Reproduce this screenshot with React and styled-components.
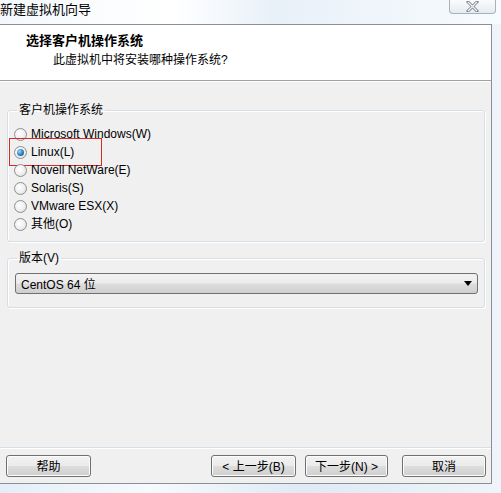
import React from "react";
import styled, { createGlobalStyle } from "styled-components";

const Global = createGlobalStyle`
  html, body {
    margin: 0;
    padding: 0;
    background: #dfe9f3;
  }
  body {
    font-family: "Liberation Sans", "Noto Sans CJK SC", sans-serif;
    font-size: 12px;
    color: #000;
  }
`;

const Window = styled.div`
  width: 501px;
  height: 493px;
  display: flex;
  flex-direction: column;
  overflow: hidden;
  background: linear-gradient(90deg, #e4eef8 0%, #f6fafd 30%, #dfeaf5 60%, #eef4fa 100%);
`;

const TitleBar = styled.div`
  height: 24px;
  flex: none;
  position: relative;
  display: flex;
  align-items: flex-start;
  font-size: 13px;
  color: #000;
  background: linear-gradient(90deg, #f4f8fc 0%, #ffffff 35%, #e8f0f8 55%, #f8fbfe 100%);
`;

const TitleText = styled.span`
  margin-top: 2px;
  line-height: 16px;
`;

const CloseButton = styled.div`
  position: absolute;
  top: 0;
  left: 449px;
  width: 47px;
  height: 14px;
  border: 1px solid #a8b2bd;
  border-top: none;
  border-radius: 0 0 4px 4px;
  background: linear-gradient(#fafbfc, #e6ebf0);
  display: flex;
  align-items: center;
  justify-content: center;
  box-sizing: border-box;
`;

const Client = styled.div`
  flex: 1;
  display: flex;
  flex-direction: column;
  width: 492px;
  margin-right: 9px;
  border-top: 1px solid #8a8f96;
  border-right: 1px solid #8a8f96;
  border-bottom: 1px solid #8a8f96;
  box-sizing: border-box;
  margin-bottom: 9px;
  background: #f0f0f0;
`;

const Header = styled.div`
  height: 56px;
  flex: none;
  background: #fff;
  border-bottom: 1px solid #a0a0a0;
  box-shadow: 0 1px 0 #fff;
  padding: 8px 0 0 26px;
  box-sizing: border-box;
`;

const HeaderTitle = styled.div`
  font-weight: bold;
  font-size: 13px;
  line-height: 16px;
`;

const HeaderSub = styled.div`
  margin: 3px 0 0 27px;
  font-size: 12px;
  line-height: 16px;
`;

const Body = styled.div`
  flex: 1;
  padding: 22px 6px 0 7px;
  display: flex;
  flex-direction: column;
  gap: 9px;
`;

const Group = styled.fieldset`
  margin: 0;
  padding: ${(p) => p.$pad};
  border: 1px solid #d5dfe5;
  border-radius: 3px;
  box-shadow: inset 1px 1px 0 #fff, 1px 1px 0 #fff;
  min-width: 0;
`;

const Legend = styled.legend`
  padding: 0 2px;
  margin-left: 3px;
  font-size: 12px;
  line-height: 14px;
`;

const RadioList = styled.div`
  display: flex;
  flex-direction: column;
`;

const RadioRow = styled.label`
  height: 18px;
  display: flex;
  align-items: center;
  gap: 4px;
  line-height: 18px;
`;

const RadioDot = styled.span`
  width: 13px;
  height: 13px;
  border-radius: 50%;
  box-sizing: border-box;
  border: 1px solid #8e8f8f;
  background: radial-gradient(circle at 40% 40%, #ffffff 0%, #f0f0f0 50%, #d4d4d4 100%);
  display: flex;
  align-items: center;
  justify-content: center;
  flex: none;
  &::after {
    content: "";
    display: ${(p) => (p.$on ? "block" : "none")};
    width: 7px;
    height: 7px;
    border-radius: 50%;
    background: radial-gradient(circle at 35% 35%, #9ad4f6 0%, #2a7fc0 55%, #0d4a82 100%);
  }
`;

const Highlight = styled.div`
  position: absolute;
  left: -5px;
  top: -5px;
  width: 93px;
  height: 28px;
  border: 1px solid #d42a2a;
  box-sizing: border-box;
  pointer-events: none;
`;

const RowWrap = styled.div`
  position: relative;
`;

const Select = styled.div`
  height: 21px;
  margin: 6px 0 0 1px;
  border: 1px solid #707070;
  border-radius: 3px;
  box-sizing: border-box;
  background: linear-gradient(#f2f2f2 0%, #ebebeb 48%, #dddddd 52%, #cfcfcf 100%);
  display: flex;
  align-items: center;
  justify-content: space-between;
  padding: 0 5px 0 5px;
  font-size: 12px;
`;

const Footer = styled.div`
  margin-top: auto;
  border-top: 1px solid #d5dfe5;
  box-shadow: inset 0 1px 0 #fff;
  height: 36px;
  flex: none;
  display: flex;
  align-items: center;
  padding: 0 5px 0 6px;
  box-sizing: border-box;
`;

const Button = styled.button`
  width: ${(p) => p.$w || 84}px;
  height: 22px;
  margin-left: ${(p) => p.$ml || 0}px;
  border: 1px solid #707070;
  border-radius: 3px;
  background: linear-gradient(#f2f2f2 0%, #ebebeb 48%, #dddddd 52%, #cfcfcf 100%);
  box-shadow: inset 0 0 0 1px #fcfcfc;
  font-family: "Liberation Sans", "Noto Sans CJK SC", sans-serif;
  font-size: 12px;
  color: #000;
  padding: 0;
  cursor: pointer;
`;

const Spacer = styled.div`
  flex: 1;
`;

const systems = [
  "Microsoft Windows(W)",
  "Linux(L)",
  "Novell NetWare(E)",
  "Solaris(S)",
  "VMware ESX(X)",
  "其他(O)",
];

export default function App() {
  return (
    <>
      <Global />
      <Window>
        <TitleBar>
          <TitleText>新建虚拟机向导</TitleText>
          <CloseButton>
            <svg width="13" height="11" viewBox="0 0 13 11">
              <path d="M2 1 L11 10 M11 1 L2 10" stroke="#7d8690" strokeWidth="3" strokeLinecap="square" />
              <path d="M2 1 L11 10 M11 1 L2 10" stroke="#f4f6f8" strokeWidth="1.2" />
            </svg>
          </CloseButton>
        </TitleBar>
        <Client>
          <Header>
            <HeaderTitle>选择客户机操作系统</HeaderTitle>
            <HeaderSub>此虚拟机中将安装哪种操作系统?</HeaderSub>
          </Header>
          <Body>
            <Group $pad="8px 6px 8px 6px">
              <Legend>客户机操作系统</Legend>
              <RadioList>
                {systems.map((s, i) => (
                  <RowWrap key={s}>
                    {i === 1 && <Highlight />}
                    <RadioRow>
                      <RadioDot $on={i === 1} />
                      {s}
                    </RadioRow>
                  </RowWrap>
                ))}
              </RadioList>
            </Group>
            <Group $pad="2px 6px 13px 6px">
              <Legend>版本(V)</Legend>
              <Select>
                <span>CentOS 64 位</span>
                <svg width="8" height="5" viewBox="0 0 8 5">
                  <path d="M0 0 H8 L4 5 Z" fill="#000" />
                </svg>
              </Select>
            </Group>
          </Body>
          <Footer>
            <Button $w={85}>帮助</Button>
            <Spacer />
            <Button $w={85}>&lt; 上一步(B)</Button>
            <Button $w={83} $ml={9}>下一步(N) &gt;</Button>
            <Button $w={84} $ml={14}>取消</Button>
          </Footer>
        </Client>
      </Window>
    </>
  );
}
